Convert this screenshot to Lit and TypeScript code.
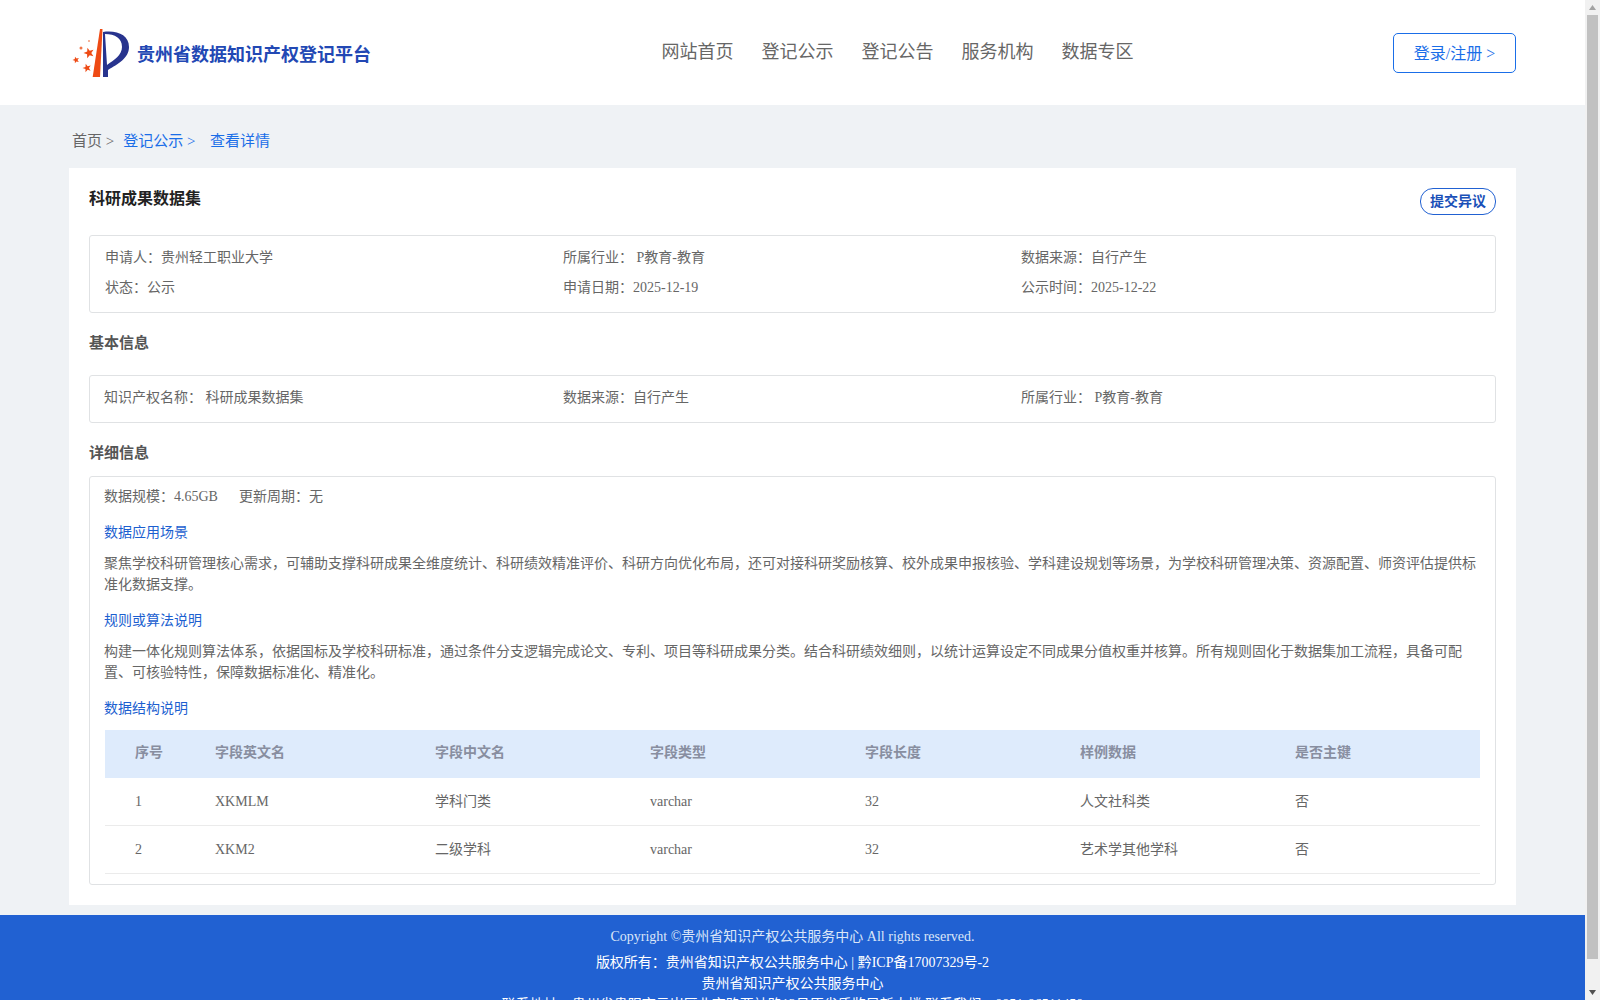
import { LitElement, html, css } from 'lit';
import { customElement } from 'lit/decorators.js';

const rows = [
  ['1', 'XKMLM', '学科门类', 'varchar', '32', '人文社科类', '否'],
  ['2', 'XKM2', '二级学科', 'varchar', '32', '艺术学其他学科', '否'],
];
const heads = ['序号', '字段英文名', '字段中文名', '字段类型', '字段长度', '样例数据', '是否主键'];
const navs = ['网站首页', '登记公示', '登记公告', '服务机构', '数据专区'];

// five point star, returned as a points string
const star = (x: number, y: number, r: number) => {
  const pts: string[] = [];
  for (let i = 0; i < 10; i++) {
    const a = -Math.PI / 2 + (i * Math.PI) / 5 - 0.3;
    const d = i % 2 ? r * 0.42 : r;
    pts.push(`${(x + d * Math.cos(a)).toFixed(1)},${(y + d * Math.sin(a)).toFixed(1)}`);
  }
  return pts.join(' ');
};

@customElement('app-root')
export class AppRoot extends LitElement {
  static styles = css`
    :host {
      display: flex;
      height: 1000px;
      overflow: hidden;
      font-family: "Liberation Serif", "Noto Sans CJK SC", serif;
      font-size: 14px;
      color: #666;
    }
    .page { width: 1585px; flex: none; background: #eff2f5; height: 1000px; overflow: hidden; }

    .top { height: 105px; background: #fff; display: flex; align-items: center; padding: 0 69px 0 72px; box-sizing: border-box; }
    .brand { display: flex; align-items: center; gap: 5px; width: 589.5px; flex: none; }
    .brand svg { display: block; flex: none; }
    .brand b { font-size: 18px; color: #2248b4; }
    .nav { display: flex; gap: 28px; font-size: 18px; color: #666; margin-top: -5px; flex: 1; }
    .login { width: 123px; height: 40px; box-sizing: border-box; border: 1px solid #1a6ee8; border-radius: 5px; color: #1a6ee8; font-size: 16px; display: flex; align-items: center; justify-content: center; padding-bottom: 2px; }

    .crumb { height: 63px; padding-left: 72px; display: flex; align-items: center; gap: 9px; box-sizing: border-box; padding-top: 5px; font-size: 15px; }
    .crumb .blue { color: #1a6ee8; }
    .crumb .last { margin-left: 5.5px; }

    .card { margin-left: 69px; width: 1447px; height: 737px; background: #fff; box-sizing: border-box; padding: 20px 20px 0; }
    .head { display: flex; justify-content: space-between; height: 47px; }
    .head h1 { margin: 0; font-size: 16px; line-height: 22px; color: #222; }
    .appeal { width: 76px; height: 27px; box-sizing: border-box; border: 1px solid #2161d2; border-radius: 13px; color: #1a50b8; font-weight: bold; font-size: 14px; display: flex; align-items: center; justify-content: center; padding-bottom: 3px; }

    .box { border: 1px solid #e0e2e4; border-radius: 3px; box-sizing: border-box; padding: 0 15px; }
    .grid { display: grid; grid-template-columns: repeat(3, 458px); }
    .info { height: 78px; padding-top: 7px; }
    .info .grid div { line-height: 30px; }
    .basic { height: 48px; padding: 7px 15px 0 14px; }
    .basic .grid { grid-template-columns: 459px 458px 458px; }
    .basic .grid div { line-height: 29px; }
    h2 { margin: 0; font-size: 15px; color: #555; line-height: 20px; box-sizing: border-box; padding-top: 20px; }
    .h-basic { height: 62px; }
    .h-detail { height: 53px; }

    .detail { height: 409px; padding: 9px 15px 0 14px; }
    .meta { display: flex; gap: 21px; line-height: 21px; }
    .sub { color: #1c5fd0; line-height: 21px; margin-top: 15px; }
    p { margin: 10px 0 0; line-height: 21px; }

    table { width: 1375px; margin: 11px 0 0 1px; border-collapse: collapse; table-layout: fixed; }
    th, td { text-align: left; font-size: 14px; padding: 0; line-height: 21px; box-sizing: border-box; }
    th { height: 48px; background: #deebfc; color: #888ea0; font-weight: bold; padding-bottom: 3px; }
    td { height: 48px; border-bottom: 1px solid #ebebeb; }
    tbody tr:first-child td { height: 47px; }
    th.idx, td.idx { padding-left: 30px; }

    .foot { margin-top: 10px; height: 120px; background: #2161d2; color: #fff; text-align: center; padding-top: 11px; box-sizing: border-box; }
    .foot div { line-height: 21px; }
    .foot .copy { color: #dbe6f8; line-height: 22px; margin-bottom: 4px; }

    .scroll { flex: 1; background: #f1f1f1; height: 1000px; position: relative; }
    .thumb { position: absolute; left: 2px; right: 2px; top: 15px; height: 944px; background: #c1c1c1; }
    .scroll svg { position: absolute; left: 4px; }
    .up { top: 5px; }
    .down { top: 990px; }
  `;

  private logo() {
    return html`<svg width="60" height="52" viewBox="0 0 60 52">
      <polygon points="28,2 30.5,2 28,50 20.7,50" fill="#ee4a14"></polygon>
      <path fill-rule="evenodd" d="M31 5 C45 3 57 8 57 20 C57 31 46 37 36 43 L36 50 L31 50 Z M33 7 L35 38 C42 33 50 28 50 20 C50 11 43 7 33 7 Z" fill="#28348e"></path>
      <polygon points=${star(17, 26, 5.5)} fill="#ee4a14"></polygon>
      <polygon points=${star(4, 33, 3.5)} fill="#ee4a14"></polygon>
      <polygon points=${star(15, 41, 4.5)} fill="#ee4a14"></polygon>
      <circle cx="9" cy="21" r="1.5" fill="#f0764a"></circle>
      <circle cx="17" cy="14" r="1" fill="#f29a78"></circle>
    </svg>`;
  }

  render() {
    return html`
      <div class="page">
        <div class="top">
          <div class="brand">${this.logo()}<b>贵州省数据知识产权登记平台</b></div>
          <div class="nav">${navs.map((n) => html`<span>${n}</span>`)}</div>
          <div class="login">登录/注册 &gt;</div>
        </div>
        <div class="crumb">
          <span>首页 &gt;</span>
          <span class="blue">登记公示 &gt;</span>
          <span class="blue last">查看详情</span>
        </div>
        <div class="card">
          <div class="head">
            <h1>科研成果数据集</h1>
            <div class="appeal">提交异议</div>
          </div>
          <div class="box info">
            <div class="grid">
              <div>申请人：贵州轻工职业大学</div>
              <div>所属行业： P教育-教育</div>
              <div>数据来源：自行产生</div>
              <div>状态：公示</div>
              <div>申请日期：2025-12-19</div>
              <div>公示时间：2025-12-22</div>
            </div>
          </div>
          <h2 class="h-basic">基本信息</h2>
          <div class="box basic">
            <div class="grid">
              <div>知识产权名称： 科研成果数据集</div>
              <div>数据来源：自行产生</div>
              <div>所属行业： P教育-教育</div>
            </div>
          </div>
          <h2 class="h-detail">详细信息</h2>
          <div class="box detail">
            <div class="meta"><span>数据规模：4.65GB</span><span>更新周期：无</span></div>
            <div class="sub">数据应用场景</div>
            <p>聚焦学校科研管理核心需求，可辅助支撑科研成果全维度统计、科研绩效精准评价、科研方向优化布局，还可对接科研奖励核算、校外成果申报核验、学科建设规划等场景，为学校科研管理决策、资源配置、师资评估提供标准化数据支撑。</p>
            <div class="sub">规则或算法说明</div>
            <p>构建一体化规则算法体系，依据国标及学校科研标准，通过条件分支逻辑完成论文、专利、项目等科研成果分类。结合科研绩效细则，以统计运算设定不同成果分值权重并核算。所有规则固化于数据集加工流程，具备可配置、可核验特性，保障数据标准化、精准化。</p>
            <div class="sub">数据结构说明</div>
            <table>
              <colgroup>
                <col style="width:110px" /><col style="width:220px" /><col style="width:215px" /><col style="width:215px" /><col style="width:215px" /><col style="width:215px" /><col style="width:185px" />
              </colgroup>
              <thead><tr>${heads.map((h, i) => html`<th class=${i === 0 ? 'idx' : ''}>${h}</th>`)}</tr></thead>
              <tbody>
                ${rows.map((r) => html`<tr>${r.map((c, i) => html`<td class=${i === 0 ? 'idx' : ''}>${c}</td>`)}</tr>`)}
              </tbody>
            </table>
          </div>
        </div>
        <div class="foot">
          <div class="copy">Copyright ©贵州省知识产权公共服务中心 All rights reserved.</div>
          <div>版权所有：贵州省知识产权公共服务中心 | 黔ICP备17007329号-2</div>
          <div>贵州省知识产权公共服务中心</div>
          <div>联系地址：贵州省贵阳市云岩区北京路亚社路12号原省质监局新大楼 联系我们：0851-86511450</div>
        </div>
      </div>
      <div class="scroll">
        <svg class="up" width="7" height="5" viewBox="0 0 7 5"><path d="M3.5 0 L7 5 L0 5 Z" fill="#a3a3a3"></path></svg>
        <div class="thumb"></div>
        <svg class="down" width="7" height="5" viewBox="0 0 7 5"><path d="M0 0 L7 0 L3.5 5 Z" fill="#505050"></path></svg>
      </div>
    `;
  }
}
